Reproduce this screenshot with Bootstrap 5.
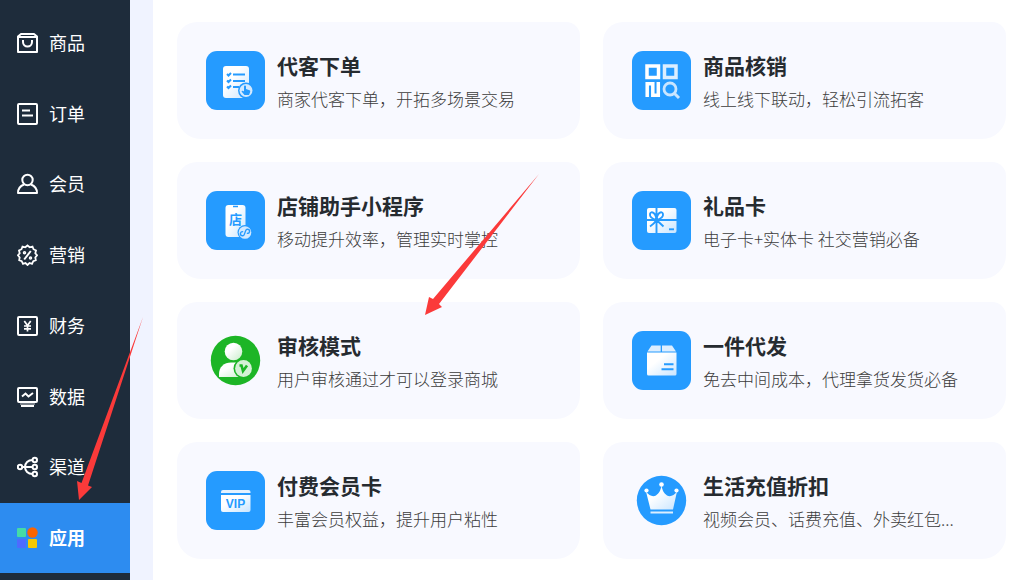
<!DOCTYPE html>
<html lang="zh-CN">
<head>
<meta charset="utf-8">
<meta name="viewport" content="width=device-width, initial-scale=1">
<title>应用</title>
<link href="https://cdn.jsdelivr.net/npm/bootstrap@5.3.0/dist/css/bootstrap.min.css" rel="stylesheet">
<style>
  body { font-family: "Noto Sans CJK SC", sans-serif; background: #fff; }
  .side { width: 130px; background: #1e2c3b; padding: 8px 0 7px; }
  .side-link { height: 70px; padding-left: 17px; gap: 11px; font-size: 18px; line-height: 24px; color: #fff; text-decoration: none; }
  .side-link:hover { color: #fff; }
  .side-link.active { background: #2d8cf0; font-weight: 700; }
  .side-link span { padding-bottom: 2px; }
  .side-link svg { width: 21px; height: 22px; fill: none; stroke: #fff; stroke-width: 2; flex: none; }
  .gutter { width: 23px; background: #f0f3ff; }
  .apps { padding: 22px 17px 22px 24px; }
  .app-grid { display: grid; grid-template-columns: 1fr 1fr; gap: 23px; }
  .app { background: #f8f9ff; border-radius: 20px 14px 24px 24px; padding: 29px; gap: 12px; color: #262b30; text-decoration: none; min-height: 117px; min-width: 0; }
  .app > svg { width: 59px; height: 59px; flex: none; }
  .app-text { height: 59px; }
  .app h2 { font-size: 21px; line-height: 28px; font-weight: 700; margin: 0 0 7px; }
  .app p { font-size: 17px; line-height: 26px; font-weight: 300; color: #3c3c3c; margin: 0; }
  .arrow { position: absolute; fill: #fb3a3a; pointer-events: none; }
  .arrow-side { left: 77px; top: 317px; }
  .arrow-app { left: 425px; top: 174px; }
</style>
</head>
<body>
<svg width="0" height="0" class="position-absolute" aria-hidden="true">
  <defs>
    <linearGradient id="fade" x1="0" y1="0" x2="1" y2="1"><stop offset=".35" stop-color="#fff"/><stop offset="1" stop-color="#c9e5ff"/></linearGradient>
    <linearGradient id="fadeGreen" x1="0" y1="0" x2="1" y2="1"><stop offset=".35" stop-color="#fff"/><stop offset="1" stop-color="#c8edca"/></linearGradient>
  </defs>
</svg>
<div class="d-flex min-vh-100 position-relative">
  <nav class="side d-flex flex-column justify-content-between flex-shrink-0 vh-100" aria-label="主菜单">
    <a class="side-link d-flex align-items-center" href="#"><svg viewBox="0 0 21 22"><path d="M1 4.500L4 2H17L20 4.500V20H1ZM1 5H20" stroke-linejoin="round"/><path d="M6 8V10A4.500 4.500 0 0 0 15 10V8"/></svg><span>商品</span></a>
    <a class="side-link d-flex align-items-center" href="#"><svg viewBox="0 0 21 22"><rect x="1" y="1" width="19" height="20" rx="1"/><path d="M5 7.500H13M5 12.500H16"/></svg><span>订单</span></a>
    <a class="side-link d-flex align-items-center" href="#"><svg viewBox="0 0 21 22"><circle cx="10.500" cy="7" r="5.200"/><path d="M7 11.500C3 13 1 16 1 20H20C20 16 18 13 14 11.500" stroke-linejoin="round"/></svg><span>会员</span></a>
    <a class="side-link d-flex align-items-center" href="#"><svg viewBox="0 0 21 22"><path d="M10.500 1.500L12.700 3.300L15.500 2.500L16.500 5.200L19 6.500L18.300 9.200L20 11.300L18.300 13.500L18.800 16.200L16.300 17.200L15 19.800L12.500 19L10.500 21L8.500 19L6 19.800L4.700 17.200L2.200 16.200L2.700 13.500L1 11.300L2.700 9.200L2 6.500L4.500 5.200L5.500 2.500L8.300 3.300Z" stroke-width="1.800"/><path d="M13.800 7L7.200 15.500"/><circle cx="7.500" cy="8.800" r="1" stroke-width="1.500"/><circle cx="13.500" cy="14" r="1" stroke-width="1.500"/></svg><span>营销</span></a>
    <a class="side-link d-flex align-items-center" href="#"><svg viewBox="0 0 21 22"><rect x="1" y="2" width="19" height="18" rx="1"/><path d="M7.300 6L10.500 10.500L13.700 6M10.500 10V16.500M7 11H14M7 13.800H14" stroke-width="1.700"/></svg><span>财务</span></a>
    <a class="side-link d-flex align-items-center" href="#"><svg viewBox="0 0 21 22"><rect x="1" y="2" width="19" height="14" rx="1"/><path d="M5 10.500L8.500 7.500L11.500 10.500L16 7"/><path d="M3 18H18" stroke-width="1.500" opacity=".55"/><path d="M4 20H17"/></svg><span>数据</span></a>
    <a class="side-link d-flex align-items-center" href="#"><svg viewBox="0 0 21 22"><circle cx="3" cy="11" r="2.200"/><circle cx="17.800" cy="4" r="2.200"/><circle cx="17.800" cy="11" r="2.200"/><circle cx="17.800" cy="18" r="2.200"/><path d="M5 11H15.500M15.500 4C11 4 8 7 8 11C8 15 11 18 15.500 18"/></svg><span>渠道</span></a>
    <a class="side-link active d-flex align-items-center" href="#" aria-current="page"><svg viewBox="0 0 21 22"><g stroke="none"><rect y="1" width="9" height="9" rx="1" fill="#45dba6"/><circle cx="15.500" cy="5.500" r="5.200" fill="#fa6400"/><rect y="12" width="9" height="9" rx="1" fill="#4d6bff"/><rect x="11" y="12" width="9" height="9" rx="1" fill="#f5c800"/></g></svg><span>应用</span></a>
  </nav>
  <div class="gutter flex-shrink-0"></div>
  <main class="apps flex-grow-1">
    <div class="app-grid">
      <a class="app d-flex" href="#">
        <svg viewBox="0 0 59 59"><rect width="59" height="59" rx="11" fill="#259bff"/><rect x="17" y="15" width="26" height="32" rx="3" fill="url(#fade)"/><path d="M27 23.500H39M27 30H39M27 36H33M21 23l1.500 1.500L25 22M21 29.500l1.500 1.500L25 28.500M21 35.500l1.500 1.500L25 34.500" stroke="#259bff" stroke-width="2" fill="none"/><circle cx="40" cy="39.500" r="8" fill="#259bff"/><circle cx="40" cy="39.500" r="6.500" fill="#d2e9ff"/><path d="M38 35.500a1 1 0 0 1 2 0V38l3.500 1.200c1 .3.800 1.300.5 2.200L43 44H38.500L35.500 40.500C36 39.500 37 39.500 38 40.500Z" fill="#259bff"/></svg>
        <div class="app-text flex-grow-1"><h2>代客下单</h2><p>商家代客下单，开拓多场景交易</p></div>
      </a>
      <a class="app d-flex" href="#">
        <svg viewBox="0 0 59 59"><rect width="59" height="59" rx="11" fill="#259bff"/><g fill="none" stroke="#fff" stroke-width="3.500"><rect x="15" y="15" width="11.500" height="11.500"/><rect x="32.500" y="15" width="11.500" height="11.500" stroke="#dceeff"/><path d="M15.200 46V32.700H20.800V44.300H26.300V31"/><circle cx="38" cy="38" r="6" stroke="#c9e5ff" stroke-width="2.800"/><path d="M42.500 42.500L47 47" stroke="#c9e5ff" stroke-width="3"/></g></svg>
        <div class="app-text flex-grow-1"><h2>商品核销</h2><p>线上线下联动，轻松引流拓客</p></div>
      </a>
      <a class="app d-flex" href="#">
        <svg viewBox="0 0 59 59"><rect width="59" height="59" rx="11" fill="#259bff"/><rect x="19.500" y="14" width="20" height="32" rx="3" fill="url(#fade)"/><path d="M27 15.500H32" stroke="#259bff" stroke-width="1.500"/><text x="23" y="33" font-size="13" font-weight="700" fill="#259bff">店</text><circle cx="39" cy="41.500" r="7.500" fill="#259bff"/><circle cx="39" cy="41.500" r="6.300" fill="#d2e9ff"/><path d="M37 41.500a2 2 0 1 0 2 2V39.500a2 2 0 1 1 2 2" fill="none" stroke="#259bff" stroke-width="1.400" transform="rotate(20 39 41.500)"/></svg>
        <div class="app-text flex-grow-1"><h2>店铺助手小程序</h2><p>移动提升效率，管理实时掌控</p></div>
      </a>
      <a class="app d-flex" href="#">
        <svg viewBox="0 0 59 59"><rect width="59" height="59" rx="11" fill="#259bff"/><rect x="15" y="17" width="29.500" height="25" rx="2" fill="url(#fade)"/><g fill="none" stroke="#259bff" stroke-width="1.900"><path d="M15 29H45M24.500 17V42M24.500 29C21 28 17.500 26 18 23C19 19.500 24 21.500 24.500 29ZM24.500 29C28 28 31.500 26 31 23C30 19.500 25 21.500 24.500 29ZM24.500 29C23 31.500 21 33.500 18 35.500M24.500 29L31.500 35.500"/><path d="M37 38.300H42"/></g></svg>
        <div class="app-text flex-grow-1"><h2>礼品卡</h2><p>电子卡+实体卡 社交营销必备</p></div>
      </a>
      <a class="app d-flex" href="#">
        <svg viewBox="0 0 59 59"><circle cx="29.500" cy="29.500" r="24.700" fill="#1db526"/><circle cx="27.500" cy="20.500" r="8.800" fill="url(#fadeGreen)"/><path d="M13 46V43C13 36 18 31.500 25 31.500H30C37 31.500 41 36 41 43V46Z" fill="url(#fadeGreen)"/><circle cx="37.500" cy="37.500" r="10" fill="#1db526"/><circle cx="37.500" cy="37.500" r="8.400" fill="#d5f1d6"/><path d="M33.500 34.500H35.500L37 40L41 34.500" stroke="#1db526" stroke-width="2.600" fill="none"/></svg>
        <div class="app-text flex-grow-1"><h2>审核模式</h2><p>用户审核通过才可以登录商城</p></div>
      </a>
      <a class="app d-flex" href="#">
        <svg viewBox="0 0 59 59"><rect width="59" height="59" rx="11" fill="#259bff"/><path d="M19.500 14.500H28.700V20.500H15.500ZM30 14.500H40L44 20.500H30Z" fill="#dceeff"/><path d="M15 21.500H44.500V43a1.500 1.500 0 0 1-1.500 1.500H16.500A1.500 1.500 0 0 1 15 43Z" fill="url(#fade)"/><path d="M32 33.200H41.500M29.500 38.300H41.500" stroke="#259bff" stroke-width="2"/></svg>
        <div class="app-text flex-grow-1"><h2>一件代发</h2><p>免去中间成本，代理拿货发货必备</p></div>
      </a>
      <a class="app d-flex" href="#">
        <svg viewBox="0 0 59 59"><rect width="59" height="59" rx="11" fill="#259bff"/><path d="M15 22V21a2 2 0 0 1 2-2H42.500a2 2 0 0 1 2 2V22Z" fill="#e4f2ff"/><path d="M15 24H44.500V39a2 2 0 0 1-2 2H17a2 2 0 0 1-2-2Z" fill="url(#fade)"/><text x="29.500" y="36.500" text-anchor="middle" font-family="Liberation Sans" font-size="12" font-weight="700" fill="#259bff">VIP</text></svg>
        <div class="app-text flex-grow-1"><h2>付费会员卡</h2><p>丰富会员权益，提升用户粘性</p></div>
      </a>
      <a class="app d-flex" href="#">
        <svg viewBox="0 0 59 59"><circle cx="29.500" cy="29.500" r="24.700" fill="#259bff"/><path d="M14 20.500C17 25 21 26 24 24.500C27 22 28.500 20 29.500 14.500C30.500 20 32 22 35 24.500C38 26 42 25 45 20.500L41 38.500H18.500Z" fill="url(#fade)"/><g fill="#fff"><circle cx="14.500" cy="19.500" r="2.100"/><circle cx="29.500" cy="13.500" r="2.300"/><circle cx="44.500" cy="19.500" r="2.100"/></g><path d="M18.500 41.500H41" stroke="#dceeff" stroke-width="2"/></svg>
        <div class="app-text flex-grow-1"><h2>生活充值折扣</h2><p>视频会员、话费充值、外卖红包...</p></div>
      </a>
    </div>
  </main>
  <svg class="arrow arrow-side" width="67" height="184" viewBox="0 0 67 184" aria-hidden="true"><path d="M66 0L11 168.500L15 170L2 183L0 164L4.500 166Z"/></svg>
  <svg class="arrow arrow-app" width="115" height="142" viewBox="0 0 115 142" aria-hidden="true"><path d="M114 0L14 130L17 133L0 141L4 123L8 125Z"/></svg>
</div>
<script src="https://cdn.jsdelivr.net/npm/bootstrap@5.3.0/dist/js/bootstrap.bundle.min.js"></script>
</body>
</html>
